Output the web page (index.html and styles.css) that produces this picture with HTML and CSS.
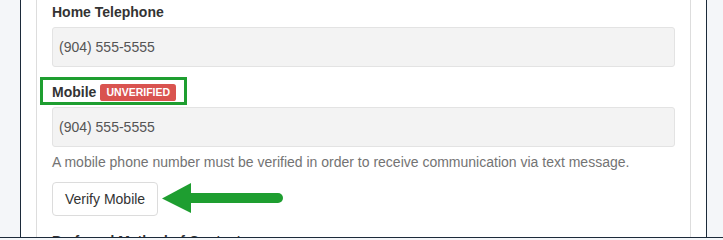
FILE: index.html
```html
<!DOCTYPE html>
<html lang="en">
<head>
<meta charset="utf-8">
<title>Contact</title>
<link rel="stylesheet" href="styles.css">
</head>
<body>
<div class="screen">
  <div class="gutter"></div>
  <div class="page">
    <div class="card">
      <div class="form-group">
        <label class="control-label">Home Telephone</label>
        <div class="form-control">(904) 555-5555</div>
      </div>
      <div class="form-group">
        <label class="control-label highlighted">Mobile <span class="badge-danger">UNVERIFIED</span><span class="annot-box"></span></label>
        <div class="form-control">(904) 555-5555</div>
        <p class="help-block">A mobile phone number must be verified in order to receive communication via text message.</p>
        <div class="action-row">
          <button class="btn" type="button">Verify Mobile</button>
          <svg class="arrow" width="130" height="34" viewBox="0 0 130 34">
            <line x1="30" y1="16" x2="120" y2="16" stroke="#1e9e30" stroke-width="10" stroke-linecap="round"/>
            <polygon points="4,16.5 33,1 33,31" fill="#1e9e30"/>
          </svg>
        </div>
      </div>
      <div class="form-group">
        <label class="control-label">Preferred Method of Contact</label>
      </div>
    </div>
  </div>
  <div class="gutter"></div>
</div>
</body>
</html>
```
FILE: styles.css
```css
* { box-sizing: border-box; }
html, body {
  margin: 0;
  padding: 0;
}
body {
  width: 723px;
  height: 238px;
  overflow: hidden;
  background: #f4f6f9;
  font-family: "Liberation Sans", Arial, Helvetica, sans-serif;
  font-size: 14px;
  line-height: 20px;
  color: #333;
}
.screen {
  display: flex;
  height: 238px;
  border-bottom: 1px solid #1c2a3a;
}
.gutter {
  width: 20px;
  flex: none;
  background: #f4f6f9;
}
.page {
  width: 687px;
  flex: none;
  background: #fff;
  border-left: 1px solid #1c2a3a;
  border-right: 1px solid #1c2a3a;
  padding: 0 15px;
  overflow: hidden;
}
.gutter:last-child { width: 16px; }
.card {
  height: 100%;
  border-left: 1px solid #dddddd;
  border-right: 1px solid #dddddd;
  padding: 2px 15px 0;
}
.form-group {
  margin-bottom: 15px;
}
.control-label {
  display: inline-block;
  font-weight: bold;
  margin-bottom: 5px;
}
.highlighted {
  position: relative;
}
.annot-box {
  position: absolute;
  left: -12px;
  top: -5px;
  width: 147px;
  height: 28px;
  border: 3px solid #1e9e30;
}
.badge-danger {
  display: inline;
  background: #d9534f;
  color: #fff;
  font-size: 10.5px;
  font-weight: bold;
  line-height: 1;
  padding: 0.2em 0.6em 0.3em;
  border-radius: 0.25em;
  vertical-align: baseline;
  position: relative;
  top: -1px;
}
.form-control {
  height: 40px;
  padding: 9px 6px;
  background: #f3f3f3;
  border: 1px solid #e3e3e3;
  border-radius: 3px;
  color: #555;
  font-size: 14px;
  line-height: 20px;
}
.help-block {
  margin: 5px 0 10px;
  color: #737373;
}
.action-row {
  display: flex;
  align-items: flex-start;
}
.btn {
  height: 34px;
  padding: 6px 12px;
  font-family: inherit;
  font-size: 14px;
  line-height: 20px;
  color: #333;
  background: #fff;
  border: 1px solid #dcdcdc;
  border-radius: 4px;
}
.arrow {
  display: block;
  flex: none;
}
```
